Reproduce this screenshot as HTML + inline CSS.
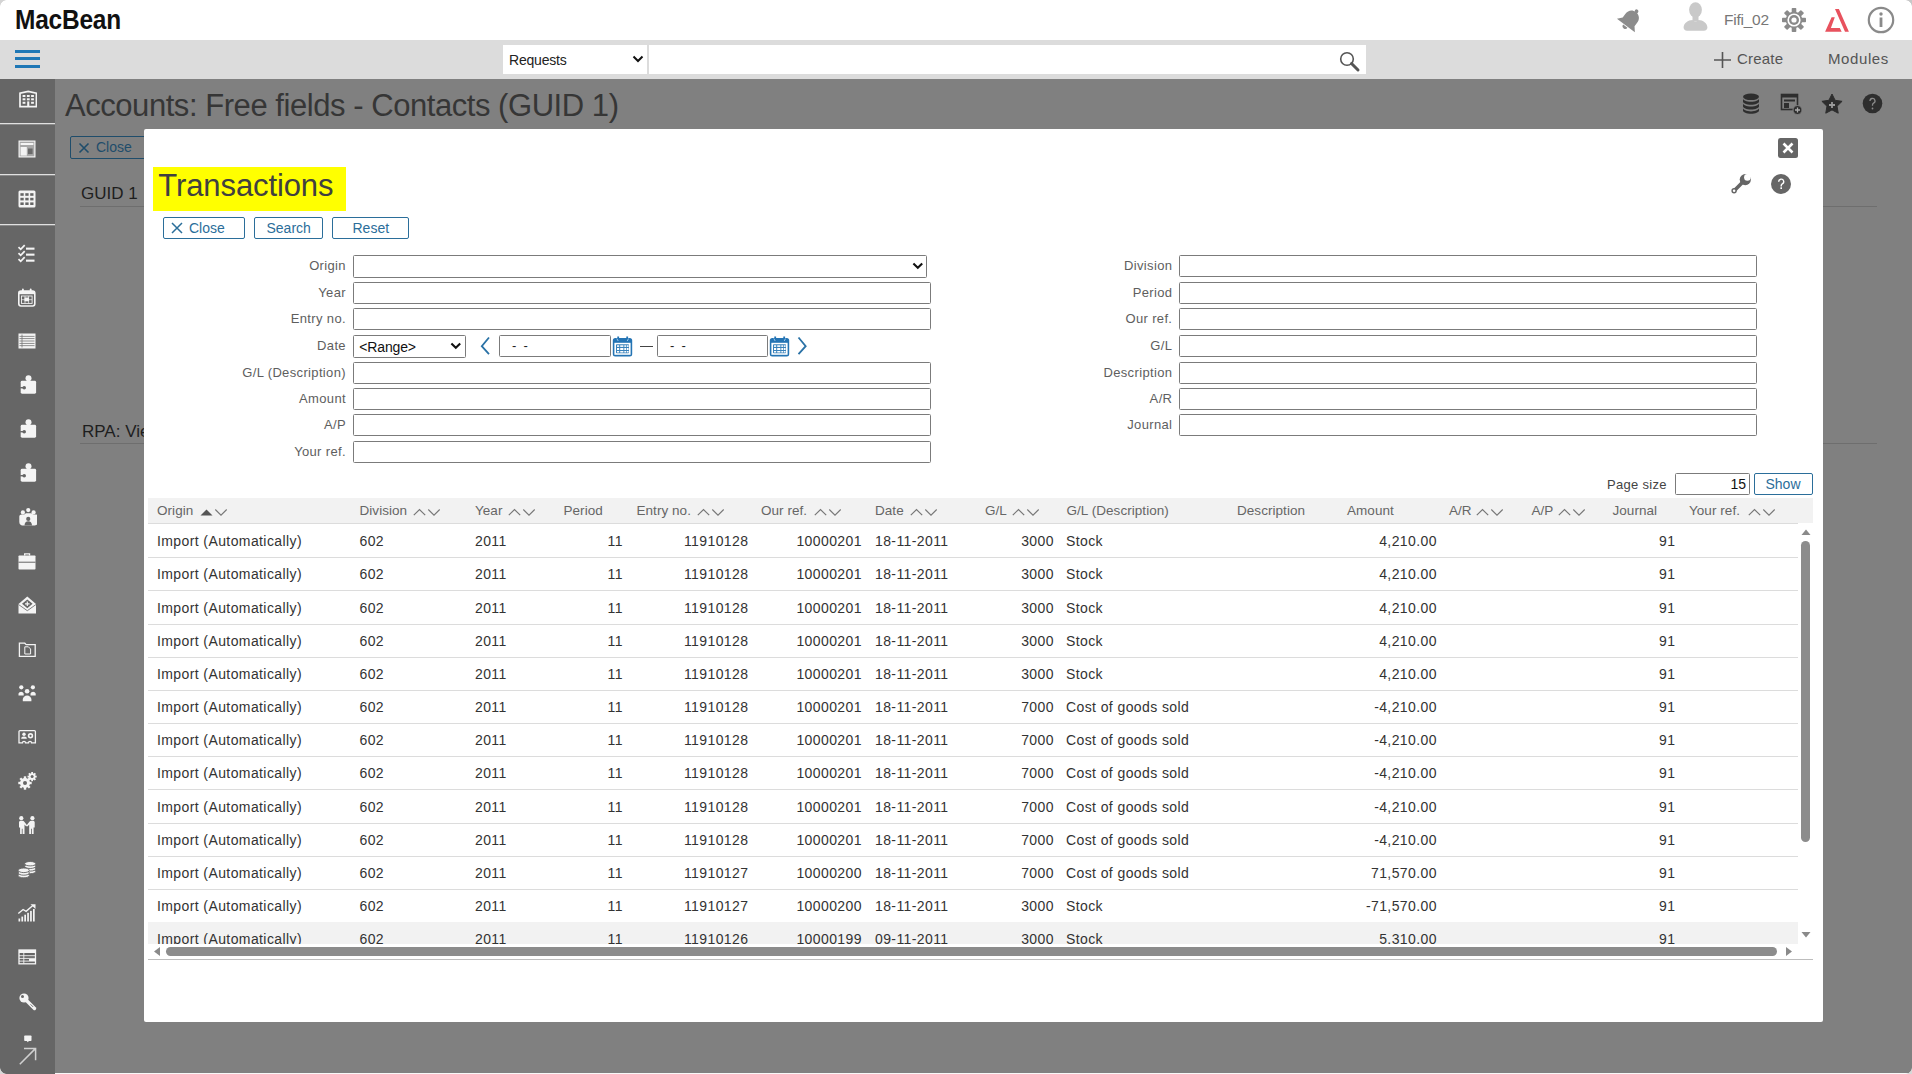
<!DOCTYPE html>
<html><head><meta charset="utf-8"><style>
*{box-sizing:border-box;margin:0;padding:0}
html,body{width:1912px;height:1074px;overflow:hidden;background:#808080;font-family:"Liberation Sans",sans-serif;}
.a{position:absolute}
#hdr{left:0;top:0;width:1912px;height:40px;background:#fff}
#nav{left:0;top:40px;width:1912px;height:39px;background:#dcdcdc}
#side{left:0;top:79px;width:55px;height:995px;background:#676767}
.sep{position:absolute;left:0;width:55px;height:2px;background:#8c8c8c}
#modal{left:144px;top:129px;width:1679px;height:893px;background:#fff;border-radius:3px}
.lbl{position:absolute;font-size:13px;color:#5a5a5a;text-align:right;width:200px;letter-spacing:0.3px;line-height:16px;white-space:nowrap}
.inp{position:absolute;height:22px;border:1px solid #7a7a7a;border-radius:2px;background:#fff}
.btn{position:absolute;height:22px;border:1px solid #3481b8;border-radius:2px;color:#2f7bb5;font-size:14px;line-height:20px;background:#fff;white-space:nowrap}
.th{position:absolute;top:504px;font-size:13px;color:#6a6a6a;letter-spacing:0.3px;white-space:nowrap;line-height:16px}
.sort{position:absolute;top:509px}
.row{position:absolute;left:148px;width:1650px;border-bottom:1px solid #dcdcdc}
.c{position:absolute;font-size:13px;color:#333;letter-spacing:0.9px;white-space:nowrap;line-height:16px}
.r{text-align:right}
svg{position:absolute;display:block}
</style></head><body>
<div style="position:absolute;left:0px;top:0px;width:1912px;height:40px;background:#fff;"></div><div style="position:absolute;left:0px;top:40px;width:1912px;height:39px;background:#dcdcdc;"></div><div style="position:absolute;top:6.84px;font-size:27px;line-height:27px;color:#111;white-space:nowrap;letter-spacing:-0.2px;font-weight:bold;left:14.50px;transform:scaleX(0.905);transform-origin:0 0;">MacBean</div><svg style="left:1616px;top:6px;" width="28" height="28" viewBox="0 0 28 28"><g transform="rotate(37 14 14)" fill="#8c8c8c"><path d="M14 4.2c-4.6 0-7.4 3.3-7.4 7.8v4.3L2.8 20.8h22.4l-3.8-4.5V12c0-4.5-2.8-7.8-7.4-7.8z"/><circle cx="14" cy="3.2" r="1.9"/><path d="M11.3 21.8a2.7 2.7 0 0 0 5.4 0z"/></g></svg><svg style="left:1682px;top:1px;" width="28" height="31" viewBox="0 0 28 31"><g fill="#c9c9c9"><ellipse cx="13.5" cy="8.8" rx="6.4" ry="7.6"/><path d="M10.5 15h6v5h-6z"/><path d="M1.6 26.5c0-4.6 4.4-7.4 9-7.6 .9 1 1.8 1.4 2.9 1.4s2-.4 2.9-1.4c4.6.2 9 3 9 7.6 0 2-1.3 3.2-3.5 3.2H5.1c-2.2 0-3.5-1.2-3.5-3.2z"/></g></svg><div style="position:absolute;top:11.78px;font-size:15.5px;line-height:15.5px;color:#777;white-space:nowrap;letter-spacing:-0.25px;left:1724.00px;">Fifi_02</div><svg style="left:1782px;top:8px;" width="24" height="24" viewBox="0 0 24 24"><g fill="#8a8a8a" transform="translate(12 12)"><rect x="-2.3" y="-12" width="4.6" height="6" rx="0.8" transform="rotate(0)"/><rect x="-2.3" y="-12" width="4.6" height="6" rx="0.8" transform="rotate(45)"/><rect x="-2.3" y="-12" width="4.6" height="6" rx="0.8" transform="rotate(90)"/><rect x="-2.3" y="-12" width="4.6" height="6" rx="0.8" transform="rotate(135)"/><rect x="-2.3" y="-12" width="4.6" height="6" rx="0.8" transform="rotate(180)"/><rect x="-2.3" y="-12" width="4.6" height="6" rx="0.8" transform="rotate(225)"/><rect x="-2.3" y="-12" width="4.6" height="6" rx="0.8" transform="rotate(270)"/><rect x="-2.3" y="-12" width="4.6" height="6" rx="0.8" transform="rotate(315)"/><circle r="8.3"/><circle r="6.6" fill="#fff"/><circle r="5" fill="#8a8a8a"/><circle r="2.6" fill="#fff"/></g></svg><svg style="left:1824px;top:8px;" width="26" height="25" viewBox="0 0 26 25"><path fill="#e8525e" d="M7.6 9.2h3.2L6.9 20h8.9l1.9 3.8H1.1zM11 1h3.9l10 22.8H21z"/></svg><svg style="left:1867px;top:6px;" width="28" height="28" viewBox="0 0 28 28"><circle cx="14" cy="14" r="12.2" fill="none" stroke="#8a8a8a" stroke-width="2.2"/><rect x="12.6" y="11.5" width="2.8" height="9.5" fill="#8a8a8a"/><circle cx="14" cy="8" r="1.7" fill="#8a8a8a"/></svg><div style="position:absolute;left:15px;top:50px;width:25px;height:3px;background:#1f78b6;"></div><div style="position:absolute;left:15px;top:57px;width:25px;height:3px;background:#1f78b6;"></div><div style="position:absolute;left:15px;top:65px;width:25px;height:3px;background:#1f78b6;"></div><div style="position:absolute;left:503px;top:45px;width:144px;height:29px;background:#fff;"></div><div style="position:absolute;top:53.15px;font-size:14px;line-height:14px;color:#222;white-space:nowrap;letter-spacing:-0.2px;left:509.00px;">Requests</div><svg style="left:632px;top:54px;" width="12" height="10" viewBox="0 0 12 10"><path d="M1.5 2.5l4.5 4.5 4.5-4.5" fill="none" stroke="#111" stroke-width="2"/></svg><div style="position:absolute;left:649px;top:45px;width:717px;height:29px;background:#fff;"></div><svg style="left:1337px;top:49px;" width="26" height="25" viewBox="0 0 26 25"><circle cx="10" cy="10" r="6.3" fill="none" stroke="#555" stroke-width="1.6"/><path d="M14.5 14.5l6.5 6.5" stroke="#555" stroke-width="3" stroke-linecap="round"/></svg><svg style="left:1714px;top:52px;" width="17" height="16" viewBox="0 0 17 16"><path d="M8.5 0v16M0 8h17" stroke="#555" stroke-width="1.6"/></svg><div style="position:absolute;top:51.30px;font-size:15px;line-height:15px;color:#555;white-space:nowrap;letter-spacing:0.2px;left:1737.00px;">Create</div><div style="position:absolute;top:51.30px;font-size:15px;line-height:15px;color:#555;white-space:nowrap;letter-spacing:0.6px;left:1828.00px;">Modules</div>
<div style="position:absolute;left:0px;top:79px;width:55px;height:995px;background:#666;"></div><div style="position:absolute;left:0px;top:123px;width:55px;height:1px;background:#e0e0e0;"></div><div style="position:absolute;left:0px;top:124px;width:55px;height:1px;background:#8a8a8a;"></div><div style="position:absolute;left:0px;top:174px;width:55px;height:1px;background:#e0e0e0;"></div><div style="position:absolute;left:0px;top:175px;width:55px;height:1px;background:#8a8a8a;"></div><div style="position:absolute;left:0px;top:224px;width:55px;height:1px;background:#e0e0e0;"></div><div style="position:absolute;left:0px;top:225px;width:55px;height:1px;background:#8a8a8a;"></div><svg style="left:16.5px;top:89px;" width="20" height="20" viewBox="0 0 20 20"><path fill="none" stroke="#f4f4f4" stroke-width="1.7" d="M3 17.6V4.2L11.2 2.4 19.4 4.2v13.4z"/><g fill="#f4f4f4"><rect x="5.60" y="6.00" width="2.8" height="2"/><rect x="5.60" y="9.30" width="2.8" height="2"/><rect x="5.60" y="12.80" width="2.8" height="2"/><rect x="9.90" y="6.00" width="2.8" height="2"/><rect x="9.90" y="9.30" width="2.8" height="2"/><rect x="14.10" y="6.00" width="2.8" height="2"/><rect x="14.10" y="9.30" width="2.8" height="2"/><rect x="14.10" y="12.80" width="2.8" height="2"/><rect x="10.2" y="12.4" width="2.1" height="5.2"/></g></svg><svg style="left:16.5px;top:139px;" width="20" height="20" viewBox="0 0 20 20"><rect x="1.5" y="1.5" width="17" height="17" fill="#f4f4f4"/><rect x="2.7" y="2.7" width="14.6" height="14.6" fill="#a8a8a8"/><rect x="3.6" y="4" width="12.8" height="2" fill="#f4f4f4"/><rect x="3.6" y="8" width="6.2" height="8.6" fill="#f4f4f4"/><rect x="11" y="9.5" width="4.6" height="5.6" fill="#6a6a6a"/></svg><svg style="left:16.5px;top:189px;" width="20" height="20" viewBox="0 0 20 20"><rect x="1.5" y="1.5" width="17" height="17" rx="1.5" fill="#f4f4f4"/><rect x="3.4" y="4.2" width="3.3" height="2.6" fill="#666"/><rect x="3.4" y="8.8" width="3.3" height="2.6" fill="#666"/><rect x="3.4" y="13.399999999999999" width="3.3" height="2.6" fill="#666"/><rect x="8.3" y="4.2" width="3.3" height="2.6" fill="#666"/><rect x="8.3" y="8.8" width="3.3" height="2.6" fill="#666"/><rect x="8.3" y="13.399999999999999" width="3.3" height="2.6" fill="#666"/><rect x="13.200000000000001" y="4.2" width="3.3" height="2.6" fill="#666"/><rect x="13.200000000000001" y="8.8" width="3.3" height="2.6" fill="#666"/><rect x="13.200000000000001" y="13.399999999999999" width="3.3" height="2.6" fill="#666"/></svg><svg style="left:16.5px;top:242.7px;" width="20" height="20" viewBox="0 0 20 20"><path d="M1.5 4.2l2.2 2.2 4-4.3" fill="none" stroke="#f4f4f4" stroke-width="1.7"/><rect x="9" y="4.6" width="8.5" height="2.1" fill="#f4f4f4"/><path d="M1.5 10.2l2.2 2.2 4-4.3" fill="none" stroke="#f4f4f4" stroke-width="1.7"/><rect x="9" y="10.6" width="8.5" height="2.1" fill="#f4f4f4"/><path d="M1.5 16.2l2.2 2.2 4-4.3" fill="none" stroke="#f4f4f4" stroke-width="1.7"/><rect x="9" y="16.6" width="8.5" height="2.1" fill="#f4f4f4"/></svg><svg style="left:16.5px;top:286.7px;" width="20" height="20" viewBox="0 0 20 20"><rect x="1.8" y="4" width="16" height="15" rx="2.2" fill="none" stroke="#f4f4f4" stroke-width="1.6"/><rect x="1.8" y="4" width="16" height="3.2" fill="#f4f4f4"/><rect x="5" y="1.5" width="1.8" height="4" rx=".9" fill="#f4f4f4"/><rect x="12.8" y="1.5" width="1.8" height="4" rx=".9" fill="#f4f4f4"/><rect x="4.5" y="9" width="10.6" height="7.4" fill="none" stroke="#f4f4f4" stroke-width="0.9"/><path d="M8 9v7.4M11.6 9v7.4M4.5 12.7h10.6" stroke="#f4f4f4" stroke-width="0.7"/><rect x="7.5" y="10.5" width="4.5" height="3.8" fill="#f4f4f4"/></svg><svg style="left:16.5px;top:330.7px;" width="20" height="20" viewBox="0 0 20 20"><rect x="1.5" y="2.5" width="17" height="15" fill="#f4f4f4"/><rect x="2.5" y="4.9" width="15" height="0.8" fill="#777"/><rect x="2.5" y="7.25" width="15" height="0.8" fill="#777"/><rect x="2.5" y="9.600000000000001" width="15" height="0.8" fill="#777"/><rect x="2.5" y="11.950000000000001" width="15" height="0.8" fill="#777"/><rect x="2.5" y="14.3" width="15" height="0.8" fill="#777"/><rect x="4.6" y="3.5" width="0.8" height="13" fill="#777"/></svg><svg style="left:16.5px;top:374.7px;" width="20" height="20" viewBox="0 0 20 20"><rect x="3.7" y="5.8" width="15.4" height="12.9" rx="1.4" fill="#f4f4f4"/><circle cx="11.5" cy="3.2" r="3" fill="#f4f4f4"/><rect x="10" y="4" width="3" height="2.5" fill="#f4f4f4"/><circle cx="7.2" cy="12.7" r="1.8" fill="#666"/><rect x="3.2" y="12" width="4" height="1.4" fill="#666"/></svg><svg style="left:16.5px;top:418.7px;" width="20" height="20" viewBox="0 0 20 20"><rect x="3.7" y="5.8" width="15.4" height="12.9" rx="1.4" fill="#f4f4f4"/><circle cx="11.5" cy="3.2" r="3" fill="#f4f4f4"/><rect x="10" y="4" width="3" height="2.5" fill="#f4f4f4"/><circle cx="7.2" cy="12.7" r="1.8" fill="#666"/><rect x="3.2" y="12" width="4" height="1.4" fill="#666"/></svg><svg style="left:16.5px;top:462.7px;" width="20" height="20" viewBox="0 0 20 20"><rect x="3.7" y="5.8" width="15.4" height="12.9" rx="1.4" fill="#f4f4f4"/><circle cx="11.5" cy="3.2" r="3" fill="#f4f4f4"/><rect x="10" y="4" width="3" height="2.5" fill="#f4f4f4"/><circle cx="7.2" cy="12.7" r="1.8" fill="#666"/><rect x="3.2" y="12" width="4" height="1.4" fill="#666"/></svg><svg style="left:16.5px;top:506.70000000000005px;" width="20" height="20" viewBox="0 0 20 20"><g fill="#f4f4f4"><circle cx="5.9" cy="5.4" r="2.1"/><circle cx="11.25" cy="3.1" r="2.1"/><circle cx="16.6" cy="5.4" r="2.1"/><path d="M2.3 9.6c0-1.3 1-2.1 2.4-2.1h2.5l1.8-1.3h5.5l1.8 1.3h2.3c1.4 0 2.4.8 2.4 2.1v5.3c0 2.6-2 3.6-4.2 3.6H6.5c-2.2 0-4.2-1-4.2-3.6z"/></g><circle cx="11.25" cy="11.9" r="2.1" fill="#666"/><path d="M7.5 18.5c0-2.8 1.6-4.3 3.75-4.3s3.75 1.5 3.75 4.3z" fill="#666"/></svg><svg style="left:16.5px;top:550.7px;" width="20" height="20" viewBox="0 0 20 20"><g fill="#f4f4f4"><rect x="1.5" y="4.5" width="17" height="14" rx="0.8"/><path d="M7 4.5V2.2h6.2v2.3h-1.3V3.4H8.3v1.1z"/></g><rect x="1.5" y="10.7" width="17" height="1" fill="#666"/></svg><svg style="left:16.5px;top:594.7px;" width="20" height="20" viewBox="0 0 20 20"><path fill="#f4f4f4" d="M1.5 9l8.8-7.5L19 9v9.5H1.5z"/><path d="M5 8.8l5.3-4.4 5.3 4.4-5.3 4.4z" fill="#666"/><path d="M8 8.8h4.6M10.3 6.5v4.6" stroke="#f4f4f4" stroke-width="1.2"/><path d="M1.5 9.5l8.8 6.2 8.7-6.2" fill="none" stroke="#666" stroke-width="0.8"/></svg><svg style="left:16.5px;top:638.7px;" width="20" height="20" viewBox="0 0 20 20"><path fill="none" stroke="#f4f4f4" stroke-width="1.3" d="M2.4 4.2h5.4l1.4 1.4h9v11.8H2.4z"/><path fill="none" stroke="#f4f4f4" stroke-width="1" d="M7.8 7.8h3.6l2.2 2.2v5H7.8z"/></svg><svg style="left:16.5px;top:682.7px;" width="20" height="20" viewBox="0 0 20 20"><g fill="#f4f4f4"><circle cx="4.3" cy="4.3" r="2.1"/><circle cx="15.9" cy="4.3" r="2.1"/><circle cx="10.1" cy="8.3" r="2.3"/><path d="M1.5 10.5a2.8 2.8 0 0 1 5.2 0v2H1.5zM13.5 10.5a2.8 2.8 0 0 1 5.2 0v2h-5.2z"/><path d="M5.8 16.5a4.3 4 0 0 1 8.6 0v1.8H5.8z"/></g></svg><svg style="left:16.5px;top:726.7px;" width="20" height="20" viewBox="0 0 20 20"><path fill="none" stroke="#f4f4f4" stroke-width="1.3" d="M3 3.6h14.4a1 1 0 0 1 1 1v11.2H14.5a1.5 1.5 0 0 0-3 0H8.5a1.5 1.5 0 0 0-3 0H2v-11.2a1 1 0 0 1 1-1z"/><g fill="#f4f4f4"><circle cx="7" cy="7.2" r="1.7"/><path d="M4.2 11.8a2.8 2.4 0 0 1 5.6 0z"/><circle cx="13.5" cy="8.8" r="2.7"/></g><circle cx="13.5" cy="8.8" r="1.1" fill="#666"/></svg><svg style="left:16.5px;top:770.7px;" width="20" height="20" viewBox="0 0 20 20"><rect x="6.8" y="5.3" width="2.4" height="13.4" fill="#f4f4f4" transform="rotate(0 8 12)"/><rect x="6.8" y="5.3" width="2.4" height="13.4" fill="#f4f4f4" transform="rotate(45 8 12)"/><rect x="6.8" y="5.3" width="2.4" height="13.4" fill="#f4f4f4" transform="rotate(90 8 12)"/><rect x="6.8" y="5.3" width="2.4" height="13.4" fill="#f4f4f4" transform="rotate(135 8 12)"/><rect x="14.2" y="1" width="1.8" height="9.2" fill="#f4f4f4" transform="rotate(0 15.1 5.6)"/><rect x="14.2" y="1" width="1.8" height="9.2" fill="#f4f4f4" transform="rotate(45 15.1 5.6)"/><rect x="14.2" y="1" width="1.8" height="9.2" fill="#f4f4f4" transform="rotate(90 15.1 5.6)"/><rect x="14.2" y="1" width="1.8" height="9.2" fill="#f4f4f4" transform="rotate(135 15.1 5.6)"/><circle cx="8" cy="12" r="5" fill="#f4f4f4"/><circle cx="15.1" cy="5.6" r="3.4" fill="#f4f4f4"/><circle cx="8" cy="12" r="2" fill="#666"/><circle cx="15.1" cy="5.6" r="1.5" fill="#666"/></svg><svg style="left:16.5px;top:814.7px;" width="20" height="20" viewBox="0 0 20 20"><g fill="#f4f4f4"><circle cx="4.3" cy="3.2" r="2.1"/><circle cx="15.4" cy="3.2" r="2.1"/><path d="M2 7.3c0-1 .8-1.6 1.7-1.6h1.8c.8 0 1.3.4 1.8 1l2.9 3.9-1 .9-1.7-1.9V19H5.6v-5.2h-.8V19H3.1v-6.5H2z"/><path d="M17.7 7.3c0-1-.8-1.6-1.7-1.6h-1.8c-.8 0-1.3.4-1.8 1l-2.9 3.9 1 .9 1.7-1.9V19h1.9v-5.2h.8V19h1.7v-6.5h1.1z"/></g></svg><svg style="left:16.5px;top:858.7px;" width="20" height="20" viewBox="0 0 20 20"><g fill="#f4f4f4" stroke="#666" stroke-width="0.9"><ellipse cx="13.2" cy="12.5" rx="5.6" ry="2.2"/><ellipse cx="13.2" cy="9.9" rx="5.6" ry="2.2"/><ellipse cx="13.2" cy="7.3" rx="5.6" ry="2.2"/><ellipse cx="13.2" cy="4.699999999999999" rx="5.6" ry="2.2"/><ellipse cx="6.8" cy="16.5" rx="5.6" ry="2.3"/><ellipse cx="6.8" cy="13.9" rx="5.6" ry="2.3"/><ellipse cx="6.8" cy="11.3" rx="5.6" ry="2.3"/></g></svg><svg style="left:16.5px;top:902.7px;" width="20" height="20" viewBox="0 0 20 20"><g fill="#f4f4f4"><rect x="1.5" y="15.5" width="1.7" height="3.0"/><rect x="4.4" y="13.6" width="1.7" height="4.9"/><rect x="7.3" y="11.7" width="1.7" height="6.8"/><rect x="10.2" y="9.8" width="1.7" height="8.7"/><rect x="13.1" y="7.9" width="1.7" height="10.6"/><rect x="16.0" y="6.0" width="1.7" height="12.5"/></g><path d="M1.3 10.5l4.8-4 3 1.8 7-6" fill="none" stroke="#f4f4f4" stroke-width="1.4"/><path d="M13.5 1.2h5v4.7z" fill="#f4f4f4"/></svg><svg style="left:16.5px;top:946.7px;" width="20" height="20" viewBox="0 0 20 20"><rect x="2" y="3" width="16.5" height="13.8" fill="none" stroke="#f4f4f4" stroke-width="1.3"/><rect x="2" y="3" width="16.5" height="3" fill="#f4f4f4"/><path d="M2 8.7h16.5M2 11.4h16.5M2 14.1h16.5M6.8 6v10.8" stroke="#f4f4f4" stroke-width="0.9"/><rect x="12" y="12" width="6" height="2" fill="#f4f4f4"/></svg><svg style="left:16.5px;top:990.7px;" width="20" height="20" viewBox="0 0 20 20"><circle cx="7" cy="7" r="4.6" fill="#f4f4f4"/><circle cx="5.5" cy="5.5" r="1.5" fill="#666"/><path d="M9.5 9.5l8 8" stroke="#f4f4f4" stroke-width="3.4" stroke-linecap="round"/><path d="M13.5 13.3l2.6 2.6" stroke="#666" stroke-width="0.9"/></svg><svg style="left:17px;top:1033px;" width="22" height="36" viewBox="0 0 22 36"><rect x="7.2" y="2.4" width="7.3" height="5.6" rx="0.8" fill="#f4f4f4"/><path d="M9.8 8l1 1.3 1-1.3z" fill="#f4f4f4"/><path d="M2.8 31.2L18.6 15.4M7 15.4h11.6v11.8" fill="none" stroke="#d0d0d0" stroke-width="1.5"/></svg><div style="position:absolute;top:89.76px;font-size:31px;line-height:31px;color:#363636;white-space:nowrap;letter-spacing:-0.45px;left:65.00px;">Accounts: Free fields - Contacts (GUID 1)</div><div style="position:absolute;left:70px;top:136px;width:90px;height:23px;border:1.5px solid #1f4d6b;border-radius:2px"></div><svg style="left:78px;top:142px;" width="12" height="12" viewBox="0 0 12 12"><path d="M1.5 1.5l9 9M10.5 1.5l-9 9" stroke="#1f4d6b" stroke-width="1.6"/></svg><div style="position:absolute;top:140.15px;font-size:14px;line-height:14px;color:#1f4d6b;white-space:nowrap;left:96.00px;">Close</div><div style="position:absolute;top:185.11px;font-size:17px;line-height:17px;color:#1e1e1e;white-space:nowrap;left:81.00px;">GUID 1</div><div style="position:absolute;left:80px;top:206px;width:1797px;height:1px;background:#6e6e6e;"></div><div style="position:absolute;top:422.61px;font-size:17px;line-height:17px;color:#1e1e1e;white-space:nowrap;left:82.00px;">RPA: View</div><div style="position:absolute;left:80px;top:443px;width:1797px;height:1px;background:#6e6e6e;"></div><svg style="left:1741px;top:93px;" width="20" height="21" viewBox="0 0 20 21"><g fill="#2e2e2e"><ellipse cx="10" cy="3.8" rx="8" ry="3.3"/><path d="M2 5.5v3c0 1.8 3.6 3.3 8 3.3s8-1.5 8-3.3v-3c0 1.8-3.6 3.3-8 3.3S2 7.3 2 5.5z"/><path d="M2 10.3v3c0 1.8 3.6 3.3 8 3.3s8-1.5 8-3.3v-3c0 1.8-3.6 3.3-8 3.3s-8-1.5-8-3.3z"/><path d="M2 15.1v2.3c0 1.8 3.6 3.3 8 3.3s8-1.5 8-3.3v-2.3c0 1.8-3.6 3.3-8 3.3s-8-1.5-8-3.3z"/></g></svg><svg style="left:1780px;top:93px;" width="23" height="22" viewBox="0 0 23 22"><rect x="1.5" y="1.5" width="16" height="15" fill="none" stroke="#2e2e2e" stroke-width="1.6"/><rect x="1.5" y="1.5" width="16" height="3" fill="#2e2e2e"/><rect x="4" y="6.5" width="11" height="2" fill="#2e2e2e"/><rect x="4" y="10" width="5" height="5" fill="#2e2e2e"/><circle cx="17.5" cy="17" r="4.5" fill="#2e2e2e" stroke="#808080" stroke-width="1"/><path d="M17.5 14.5v5M15 17h5" stroke="#aaa" stroke-width="1.3"/></svg><svg style="left:1821px;top:93px;" width="22" height="21" viewBox="0 0 22 21"><path fill="#2e2e2e" stroke="#2e2e2e" stroke-width="1" stroke-linejoin="round" d="M11.00 1.00 L14.12 7.31 L21.08 8.32 L16.04 13.24 L17.23 20.18 L11.00 16.90 L4.77 20.18 L5.96 13.24 L0.92 8.32 L7.88 7.31z"/><path d="M11 9v6M8 12h6" stroke="#9a9a9a" stroke-width="1.8"/></svg><svg style="left:1862px;top:93px;" width="21" height="21" viewBox="0 0 21 21"><circle cx="10.5" cy="10.5" r="9.8" fill="#2e2e2e"/><path d="M8 8a2.5 2.5 0 1 1 3.6 2.2c-.8.4-1.1.9-1.1 1.8v.8" fill="none" stroke="#8a8a8a" stroke-width="1.3"/><circle cx="10.5" cy="15.5" r="0.9" fill="#8a8a8a"/></svg><div style="position:absolute;left:55px;top:1073px;width:1857px;height:1px;background:#f8f8f8;"></div><div style="position:absolute;left:0;top:0;width:7px;height:7px;background:radial-gradient(circle at 7px 7px,transparent 6.5px,#d4d4d4 7.2px)"></div><div style="position:absolute;left:1905px;top:0;width:7px;height:7px;background:radial-gradient(circle at 0 7px,transparent 6.5px,#c8c8c8 7.2px)"></div><div style="position:absolute;left:0;top:1067px;width:7px;height:7px;background:radial-gradient(circle at 7px 0,transparent 6.5px,#d8d8d8 7.2px)"></div><div style="position:absolute;left:1905px;top:1067px;width:7px;height:7px;background:radial-gradient(circle at 0 0,transparent 6.5px,#d8d8d8 7.2px)"></div>
<div style="position:absolute;left:144px;top:129px;width:1679px;height:893px;background:#fff;border-radius:2px"></div><svg style="left:1778px;top:138px;" width="20" height="20" viewBox="0 0 20 20"><rect width="20" height="20" rx="2.5" fill="#666"/><path d="M5.5 5.5l9 9M14.5 5.5l-9 9" stroke="#fff" stroke-width="2.6"/></svg><svg style="left:1730px;top:172px;" width="24" height="24" viewBox="0 0 24 24"><circle cx="15.3" cy="7.6" r="5.6" fill="#666"/><circle cx="17.4" cy="5.4" r="3.3" fill="#fff"/><path d="M12.6 10.3L4.2 18.7" stroke="#666" stroke-width="3.6" stroke-linecap="round"/><circle cx="4.1" cy="18.8" r="2.7" fill="#666"/><circle cx="4.1" cy="18.8" r="1.25" fill="#fff"/></svg><svg style="left:1771px;top:174px;" width="20" height="20" viewBox="0 0 20 20"><circle cx="10" cy="10" r="10" fill="#666"/><path d="M7.7 7.7a2.5 2.5 0 1 1 3.6 2.2c-.8.4-1.1 1-1.1 1.9v.6" fill="none" stroke="#fff" stroke-width="1.4"/><rect x="9.4" y="13.3" width="1.6" height="1.7" fill="#fff"/></svg><div style="position:absolute;left:153px;top:167px;width:193px;height:44px;background:#ffff00;"></div><div style="position:absolute;top:170.16px;font-size:31px;line-height:31px;color:#404040;white-space:nowrap;letter-spacing:-0.1px;left:158.30px;">Transactions</div><div style="position:absolute;left:163px;top:217px;width:82px;height:22px;border:1px solid #2b6e9a;border-radius:2px"></div><div style="position:absolute;top:221.15px;font-size:14px;line-height:14px;color:#2b6e9a;white-space:nowrap;left:189.00px;">Close</div><svg style="left:171px;top:222px;" width="12" height="12" viewBox="0 0 12 12"><path d="M1 1l10 10M11 1L1 11" stroke="#2b6e9a" stroke-width="1.5"/></svg><div style="position:absolute;left:254px;top:217px;width:69px;height:22px;border:1px solid #2b6e9a;border-radius:2px"></div><div style="position:absolute;top:221.15px;font-size:14px;line-height:14px;color:#2b6e9a;white-space:nowrap;left:266.50px;">Search</div><div style="position:absolute;left:332px;top:217px;width:77px;height:22px;border:1px solid #2b6e9a;border-radius:2px"></div><div style="position:absolute;top:221.15px;font-size:14px;line-height:14px;color:#2b6e9a;white-space:nowrap;left:352.50px;">Reset</div><div style="position:absolute;top:259.00px;font-size:13px;line-height:13px;color:#5e5e5e;white-space:nowrap;letter-spacing:0.35px;left:145.95px;width:200px;text-align:right;">Origin</div><div style="position:absolute;left:353px;top:255px;width:574px;height:23px;border:1px solid #7b7b7b;border-radius:1.5px;background:#fff;"></div><svg style="left:911.6px;top:261.8px;" width="12" height="8" viewBox="0 0 12 8"><path d="M1.4 1.4l4.4 4.3 4.4-4.3" fill="none" stroke="#111" stroke-width="2.1"/></svg><div style="position:absolute;top:286.00px;font-size:13px;line-height:13px;color:#5e5e5e;white-space:nowrap;letter-spacing:0.35px;left:145.95px;width:200px;text-align:right;">Year</div><div style="position:absolute;left:353px;top:282px;width:578px;height:22px;border:1px solid #7b7b7b;border-radius:1.5px;background:#fff;"></div><div style="position:absolute;top:312.00px;font-size:13px;line-height:13px;color:#5e5e5e;white-space:nowrap;letter-spacing:0.35px;left:145.95px;width:200px;text-align:right;">Entry no.</div><div style="position:absolute;left:353px;top:308px;width:578px;height:22px;border:1px solid #7b7b7b;border-radius:1.5px;background:#fff;"></div><div style="position:absolute;top:339.00px;font-size:13px;line-height:13px;color:#5e5e5e;white-space:nowrap;letter-spacing:0.35px;left:145.95px;width:200px;text-align:right;">Date</div><div style="position:absolute;left:353px;top:335px;width:113px;height:23px;border:1px solid #7b7b7b;border-radius:1.5px;background:#fff;"></div><div style="position:absolute;top:339.95px;font-size:14px;line-height:14px;color:#111;white-space:nowrap;letter-spacing:-0.15px;left:359.30px;">&lt;Range&gt;</div><svg style="left:450.3px;top:342px;" width="12" height="8" viewBox="0 0 12 8"><path d="M1.4 1.4l4.4 4.3 4.4-4.3" fill="none" stroke="#111" stroke-width="2.1"/></svg><svg style="left:478px;top:336px;" width="14" height="20" viewBox="0 0 14 20"><path d="M11 1.5L3.8 10.2l7.2 8" fill="none" stroke="#2a72a6" stroke-width="1.8"/></svg><div style="position:absolute;left:499px;top:335px;width:112px;height:22px;border:1px solid #7b7b7b;border-radius:1.5px;background:#fff;"></div><div style="position:absolute;top:339.00px;font-size:13px;line-height:13px;color:#222;white-space:nowrap;left:512.00px;">-&nbsp;&nbsp;-</div><svg style="left:611.5px;top:335.5px;" width="21" height="21" viewBox="0 0 21 21"><rect x="0.8" y="2" width="19.4" height="18.5" rx="2.5" fill="#2474b4"/><rect x="2.4" y="6.8" width="16.2" height="12" fill="#fff"/><rect x="4" y="8.3" width="13" height="9" rx="0.8" fill="#2474b4" opacity="0.9"/><g fill="#fff"><rect x="5" y="9.3" width="2.2" height="1.6"/><rect x="8.2" y="9.3" width="3.2" height="1.6"/><rect x="12.3" y="9.3" width="2" height="1.6"/><rect x="15" y="9.3" width="1.6" height="1.6"/><rect x="5" y="12" width="2.2" height="2"/><rect x="8.2" y="12" width="3.2" height="2"/><rect x="12.3" y="12" width="2" height="2"/><rect x="15" y="12" width="1.6" height="2"/><rect x="5" y="15" width="2.2" height="1.5"/><rect x="8.2" y="15" width="3.2" height="1.5"/><rect x="12.3" y="15" width="2" height="1.5"/><rect x="15" y="15" width="1.6" height="1.5"/></g><path d="M6.2 0.5v4.5M15.2 0.5v4.5" stroke="#2474b4" stroke-width="1.8"/><path d="M4.8 2.5l1.4 2.5M16.6 2.5l-1.4 2.5" stroke="#cfe8ff" stroke-width="0.7"/></svg><div style="position:absolute;left:640px;top:346px;width:13px;height:1px;background:#444;"></div><div style="position:absolute;left:657px;top:335px;width:111px;height:22px;border:1px solid #7b7b7b;border-radius:1.5px;background:#fff;"></div><div style="position:absolute;top:339.00px;font-size:13px;line-height:13px;color:#222;white-space:nowrap;left:670.00px;">-&nbsp;&nbsp;-</div><svg style="left:768.5px;top:335.5px;" width="21" height="21" viewBox="0 0 21 21"><rect x="0.8" y="2" width="19.4" height="18.5" rx="2.5" fill="#2474b4"/><rect x="2.4" y="6.8" width="16.2" height="12" fill="#fff"/><rect x="4" y="8.3" width="13" height="9" rx="0.8" fill="#2474b4" opacity="0.9"/><g fill="#fff"><rect x="5" y="9.3" width="2.2" height="1.6"/><rect x="8.2" y="9.3" width="3.2" height="1.6"/><rect x="12.3" y="9.3" width="2" height="1.6"/><rect x="15" y="9.3" width="1.6" height="1.6"/><rect x="5" y="12" width="2.2" height="2"/><rect x="8.2" y="12" width="3.2" height="2"/><rect x="12.3" y="12" width="2" height="2"/><rect x="15" y="12" width="1.6" height="2"/><rect x="5" y="15" width="2.2" height="1.5"/><rect x="8.2" y="15" width="3.2" height="1.5"/><rect x="12.3" y="15" width="2" height="1.5"/><rect x="15" y="15" width="1.6" height="1.5"/></g><path d="M6.2 0.5v4.5M15.2 0.5v4.5" stroke="#2474b4" stroke-width="1.8"/><path d="M4.8 2.5l1.4 2.5M16.6 2.5l-1.4 2.5" stroke="#cfe8ff" stroke-width="0.7"/></svg><svg style="left:796px;top:336px;" width="14" height="20" viewBox="0 0 14 20"><path d="M2.5 1.5L9.7 10.2l-7.2 8" fill="none" stroke="#2a72a6" stroke-width="1.8"/></svg><div style="position:absolute;top:366.00px;font-size:13px;line-height:13px;color:#5e5e5e;white-space:nowrap;letter-spacing:0.35px;left:145.95px;width:200px;text-align:right;">G/L (Description)</div><div style="position:absolute;left:353px;top:362px;width:578px;height:22px;border:1px solid #7b7b7b;border-radius:1.5px;background:#fff;"></div><div style="position:absolute;top:392.00px;font-size:13px;line-height:13px;color:#5e5e5e;white-space:nowrap;letter-spacing:0.35px;left:145.95px;width:200px;text-align:right;">Amount</div><div style="position:absolute;left:353px;top:388px;width:578px;height:22px;border:1px solid #7b7b7b;border-radius:1.5px;background:#fff;"></div><div style="position:absolute;top:418.00px;font-size:13px;line-height:13px;color:#5e5e5e;white-space:nowrap;letter-spacing:0.35px;left:145.95px;width:200px;text-align:right;">A/P</div><div style="position:absolute;left:353px;top:414px;width:578px;height:22px;border:1px solid #7b7b7b;border-radius:1.5px;background:#fff;"></div><div style="position:absolute;top:445.00px;font-size:13px;line-height:13px;color:#5e5e5e;white-space:nowrap;letter-spacing:0.35px;left:145.95px;width:200px;text-align:right;">Your ref.</div><div style="position:absolute;left:353px;top:441px;width:578px;height:22px;border:1px solid #7b7b7b;border-radius:1.5px;background:#fff;"></div><div style="position:absolute;top:259.00px;font-size:13px;line-height:13px;color:#5e5e5e;white-space:nowrap;letter-spacing:0.35px;left:972.35px;width:200px;text-align:right;">Division</div><div style="position:absolute;left:1179px;top:255px;width:578px;height:22px;border:1px solid #7b7b7b;border-radius:1.5px;background:#fff;"></div><div style="position:absolute;top:286.00px;font-size:13px;line-height:13px;color:#5e5e5e;white-space:nowrap;letter-spacing:0.35px;left:972.35px;width:200px;text-align:right;">Period</div><div style="position:absolute;left:1179px;top:282px;width:578px;height:22px;border:1px solid #7b7b7b;border-radius:1.5px;background:#fff;"></div><div style="position:absolute;top:312.00px;font-size:13px;line-height:13px;color:#5e5e5e;white-space:nowrap;letter-spacing:0.35px;left:972.35px;width:200px;text-align:right;">Our ref.</div><div style="position:absolute;left:1179px;top:308px;width:578px;height:22px;border:1px solid #7b7b7b;border-radius:1.5px;background:#fff;"></div><div style="position:absolute;top:339.00px;font-size:13px;line-height:13px;color:#5e5e5e;white-space:nowrap;letter-spacing:0.35px;left:972.35px;width:200px;text-align:right;">G/L</div><div style="position:absolute;left:1179px;top:335px;width:578px;height:22px;border:1px solid #7b7b7b;border-radius:1.5px;background:#fff;"></div><div style="position:absolute;top:366.00px;font-size:13px;line-height:13px;color:#5e5e5e;white-space:nowrap;letter-spacing:0.35px;left:972.35px;width:200px;text-align:right;">Description</div><div style="position:absolute;left:1179px;top:362px;width:578px;height:22px;border:1px solid #7b7b7b;border-radius:1.5px;background:#fff;"></div><div style="position:absolute;top:392.00px;font-size:13px;line-height:13px;color:#5e5e5e;white-space:nowrap;letter-spacing:0.35px;left:972.35px;width:200px;text-align:right;">A/R</div><div style="position:absolute;left:1179px;top:388px;width:578px;height:22px;border:1px solid #7b7b7b;border-radius:1.5px;background:#fff;"></div><div style="position:absolute;top:418.00px;font-size:13px;line-height:13px;color:#5e5e5e;white-space:nowrap;letter-spacing:0.35px;left:972.35px;width:200px;text-align:right;">Journal</div><div style="position:absolute;left:1179px;top:414px;width:578px;height:22px;border:1px solid #7b7b7b;border-radius:1.5px;background:#fff;"></div><div style="position:absolute;top:477.80px;font-size:13px;line-height:13px;color:#444;white-space:nowrap;letter-spacing:0.3px;left:1607.00px;">Page size</div><div style="position:absolute;left:1675px;top:473px;width:75px;height:22px;border:1px solid #7b7b7b;border-radius:1.5px;background:#fff;"></div><div style="position:absolute;top:477.15px;font-size:14px;line-height:14px;color:#111;white-space:nowrap;left:1706.00px;width:40px;text-align:right;">15</div><div style="position:absolute;left:1754px;top:473px;width:59px;height:22px;border:1px solid #2b6e9a;border-radius:2px"></div><div style="position:absolute;top:477.15px;font-size:14px;line-height:14px;color:#2b6e9a;white-space:nowrap;left:1765.50px;">Show</div>
<div style="position:absolute;left:148px;top:498px;width:1665px;height:25px;background:#f2f2f2;"></div><div style="position:absolute;left:148px;top:523px;width:1650px;height:1px;background:#dcdcdc;"></div><div style="position:absolute;top:504.27px;font-size:13.5px;line-height:13.5px;color:#666;white-space:nowrap;letter-spacing:0.05px;left:157.00px;">Origin</div><svg style="left:200px;top:507.7px;" width="28" height="9" viewBox="0 0 28 9"><path d="M0.5 7.5L6.5 1.5l6 6z" fill="#555"/><path d="M15.3 1.5L21 7.2l5.7-5.7" fill="none" stroke="#777" stroke-width="1.1"/></svg><div style="position:absolute;top:504.27px;font-size:13.5px;line-height:13.5px;color:#666;white-space:nowrap;letter-spacing:0.05px;left:359.50px;">Division</div><svg style="left:413px;top:507.7px;" width="28" height="9" viewBox="0 0 28 9"><path d="M0.8 7.2L6.5 1.5l5.7 5.7" fill="none" stroke="#777" stroke-width="1.2"/><path d="M15.3 1.5L21 7.2l5.7-5.7" fill="none" stroke="#777" stroke-width="1.1"/></svg><div style="position:absolute;top:504.27px;font-size:13.5px;line-height:13.5px;color:#666;white-space:nowrap;letter-spacing:0.05px;left:475.00px;">Year</div><svg style="left:508px;top:507.7px;" width="28" height="9" viewBox="0 0 28 9"><path d="M0.8 7.2L6.5 1.5l5.7 5.7" fill="none" stroke="#777" stroke-width="1.2"/><path d="M15.3 1.5L21 7.2l5.7-5.7" fill="none" stroke="#777" stroke-width="1.1"/></svg><div style="position:absolute;top:504.27px;font-size:13.5px;line-height:13.5px;color:#666;white-space:nowrap;letter-spacing:0.05px;left:563.50px;">Period</div><div style="position:absolute;top:504.27px;font-size:13.5px;line-height:13.5px;color:#666;white-space:nowrap;letter-spacing:0.05px;left:636.50px;">Entry no.</div><svg style="left:697px;top:507.7px;" width="28" height="9" viewBox="0 0 28 9"><path d="M0.8 7.2L6.5 1.5l5.7 5.7" fill="none" stroke="#777" stroke-width="1.2"/><path d="M15.3 1.5L21 7.2l5.7-5.7" fill="none" stroke="#777" stroke-width="1.1"/></svg><div style="position:absolute;top:504.27px;font-size:13.5px;line-height:13.5px;color:#666;white-space:nowrap;letter-spacing:0.05px;left:761.00px;">Our ref.</div><svg style="left:814px;top:507.7px;" width="28" height="9" viewBox="0 0 28 9"><path d="M0.8 7.2L6.5 1.5l5.7 5.7" fill="none" stroke="#777" stroke-width="1.2"/><path d="M15.3 1.5L21 7.2l5.7-5.7" fill="none" stroke="#777" stroke-width="1.1"/></svg><div style="position:absolute;top:504.27px;font-size:13.5px;line-height:13.5px;color:#666;white-space:nowrap;letter-spacing:0.05px;left:875.00px;">Date</div><svg style="left:910px;top:507.7px;" width="28" height="9" viewBox="0 0 28 9"><path d="M0.8 7.2L6.5 1.5l5.7 5.7" fill="none" stroke="#777" stroke-width="1.2"/><path d="M15.3 1.5L21 7.2l5.7-5.7" fill="none" stroke="#777" stroke-width="1.1"/></svg><div style="position:absolute;top:504.27px;font-size:13.5px;line-height:13.5px;color:#666;white-space:nowrap;letter-spacing:0.05px;left:985.00px;">G/L</div><svg style="left:1012px;top:507.7px;" width="28" height="9" viewBox="0 0 28 9"><path d="M0.8 7.2L6.5 1.5l5.7 5.7" fill="none" stroke="#777" stroke-width="1.2"/><path d="M15.3 1.5L21 7.2l5.7-5.7" fill="none" stroke="#777" stroke-width="1.1"/></svg><div style="position:absolute;top:504.27px;font-size:13.5px;line-height:13.5px;color:#666;white-space:nowrap;letter-spacing:0.05px;left:1066.50px;">G/L (Description)</div><div style="position:absolute;top:504.27px;font-size:13.5px;line-height:13.5px;color:#666;white-space:nowrap;letter-spacing:0.05px;left:1237.00px;">Description</div><div style="position:absolute;top:504.27px;font-size:13.5px;line-height:13.5px;color:#666;white-space:nowrap;letter-spacing:0.05px;left:1347.00px;">Amount</div><div style="position:absolute;top:504.27px;font-size:13.5px;line-height:13.5px;color:#666;white-space:nowrap;letter-spacing:0.05px;left:1449.00px;">A/R</div><svg style="left:1476px;top:507.7px;" width="28" height="9" viewBox="0 0 28 9"><path d="M0.8 7.2L6.5 1.5l5.7 5.7" fill="none" stroke="#777" stroke-width="1.2"/><path d="M15.3 1.5L21 7.2l5.7-5.7" fill="none" stroke="#777" stroke-width="1.1"/></svg><div style="position:absolute;top:504.27px;font-size:13.5px;line-height:13.5px;color:#666;white-space:nowrap;letter-spacing:0.05px;left:1531.50px;">A/P</div><svg style="left:1558px;top:507.7px;" width="28" height="9" viewBox="0 0 28 9"><path d="M0.8 7.2L6.5 1.5l5.7 5.7" fill="none" stroke="#777" stroke-width="1.2"/><path d="M15.3 1.5L21 7.2l5.7-5.7" fill="none" stroke="#777" stroke-width="1.1"/></svg><div style="position:absolute;top:504.27px;font-size:13.5px;line-height:13.5px;color:#666;white-space:nowrap;letter-spacing:0.05px;left:1612.50px;">Journal</div><div style="position:absolute;top:504.27px;font-size:13.5px;line-height:13.5px;color:#666;white-space:nowrap;letter-spacing:0.05px;left:1689.00px;">Your ref.</div><svg style="left:1748px;top:507.7px;" width="28" height="9" viewBox="0 0 28 9"><path d="M0.8 7.2L6.5 1.5l5.7 5.7" fill="none" stroke="#777" stroke-width="1.2"/><path d="M15.3 1.5L21 7.2l5.7-5.7" fill="none" stroke="#777" stroke-width="1.1"/></svg><div style="position:absolute;left:0;top:524px;width:1912px;height:420px;overflow:hidden"><div style="position:absolute;left:148px;top:33px;width:1650px;height:1px;background:#dcdcdc;"></div><div style="position:absolute;top:10.15px;font-size:14px;line-height:14px;color:#333;white-space:nowrap;letter-spacing:0.4px;left:157.00px;">Import (Automatically)</div><div style="position:absolute;top:10.15px;font-size:14px;line-height:14px;color:#333;white-space:nowrap;letter-spacing:0.4px;left:359.50px;">602</div><div style="position:absolute;top:10.15px;font-size:14px;line-height:14px;color:#333;white-space:nowrap;letter-spacing:0.4px;left:475.00px;">2011</div><div style="position:absolute;top:10.15px;font-size:14px;line-height:14px;color:#333;white-space:nowrap;letter-spacing:0.4px;left:562.90px;width:60px;text-align:right;">11</div><div style="position:absolute;top:10.15px;font-size:14px;line-height:14px;color:#333;white-space:nowrap;letter-spacing:0.4px;left:648.40px;width:100px;text-align:right;">11910128</div><div style="position:absolute;top:10.15px;font-size:14px;line-height:14px;color:#333;white-space:nowrap;letter-spacing:0.4px;left:761.90px;width:100px;text-align:right;">10000201</div><div style="position:absolute;top:10.15px;font-size:14px;line-height:14px;color:#333;white-space:nowrap;letter-spacing:0.4px;left:875.00px;">18-11-2011</div><div style="position:absolute;top:10.15px;font-size:14px;line-height:14px;color:#333;white-space:nowrap;letter-spacing:0.4px;left:993.90px;width:60px;text-align:right;">3000</div><div style="position:absolute;top:10.15px;font-size:14px;line-height:14px;color:#333;white-space:nowrap;letter-spacing:0.4px;left:1066.00px;">Stock</div><div style="position:absolute;top:10.15px;font-size:14px;line-height:14px;color:#333;white-space:nowrap;letter-spacing:0.4px;left:1316.90px;width:120px;text-align:right;">4,210.00</div><div style="position:absolute;top:10.15px;font-size:14px;line-height:14px;color:#333;white-space:nowrap;letter-spacing:0.4px;left:1635.40px;width:40px;text-align:right;">91</div><div style="position:absolute;left:148px;top:66px;width:1650px;height:1px;background:#dcdcdc;"></div><div style="position:absolute;top:43.33px;font-size:14px;line-height:14px;color:#333;white-space:nowrap;letter-spacing:0.4px;left:157.00px;">Import (Automatically)</div><div style="position:absolute;top:43.33px;font-size:14px;line-height:14px;color:#333;white-space:nowrap;letter-spacing:0.4px;left:359.50px;">602</div><div style="position:absolute;top:43.33px;font-size:14px;line-height:14px;color:#333;white-space:nowrap;letter-spacing:0.4px;left:475.00px;">2011</div><div style="position:absolute;top:43.33px;font-size:14px;line-height:14px;color:#333;white-space:nowrap;letter-spacing:0.4px;left:562.90px;width:60px;text-align:right;">11</div><div style="position:absolute;top:43.33px;font-size:14px;line-height:14px;color:#333;white-space:nowrap;letter-spacing:0.4px;left:648.40px;width:100px;text-align:right;">11910128</div><div style="position:absolute;top:43.33px;font-size:14px;line-height:14px;color:#333;white-space:nowrap;letter-spacing:0.4px;left:761.90px;width:100px;text-align:right;">10000201</div><div style="position:absolute;top:43.33px;font-size:14px;line-height:14px;color:#333;white-space:nowrap;letter-spacing:0.4px;left:875.00px;">18-11-2011</div><div style="position:absolute;top:43.33px;font-size:14px;line-height:14px;color:#333;white-space:nowrap;letter-spacing:0.4px;left:993.90px;width:60px;text-align:right;">3000</div><div style="position:absolute;top:43.33px;font-size:14px;line-height:14px;color:#333;white-space:nowrap;letter-spacing:0.4px;left:1066.00px;">Stock</div><div style="position:absolute;top:43.33px;font-size:14px;line-height:14px;color:#333;white-space:nowrap;letter-spacing:0.4px;left:1316.90px;width:120px;text-align:right;">4,210.00</div><div style="position:absolute;top:43.33px;font-size:14px;line-height:14px;color:#333;white-space:nowrap;letter-spacing:0.4px;left:1635.40px;width:40px;text-align:right;">91</div><div style="position:absolute;left:148px;top:100px;width:1650px;height:1px;background:#dcdcdc;"></div><div style="position:absolute;top:76.51px;font-size:14px;line-height:14px;color:#333;white-space:nowrap;letter-spacing:0.4px;left:157.00px;">Import (Automatically)</div><div style="position:absolute;top:76.51px;font-size:14px;line-height:14px;color:#333;white-space:nowrap;letter-spacing:0.4px;left:359.50px;">602</div><div style="position:absolute;top:76.51px;font-size:14px;line-height:14px;color:#333;white-space:nowrap;letter-spacing:0.4px;left:475.00px;">2011</div><div style="position:absolute;top:76.51px;font-size:14px;line-height:14px;color:#333;white-space:nowrap;letter-spacing:0.4px;left:562.90px;width:60px;text-align:right;">11</div><div style="position:absolute;top:76.51px;font-size:14px;line-height:14px;color:#333;white-space:nowrap;letter-spacing:0.4px;left:648.40px;width:100px;text-align:right;">11910128</div><div style="position:absolute;top:76.51px;font-size:14px;line-height:14px;color:#333;white-space:nowrap;letter-spacing:0.4px;left:761.90px;width:100px;text-align:right;">10000201</div><div style="position:absolute;top:76.51px;font-size:14px;line-height:14px;color:#333;white-space:nowrap;letter-spacing:0.4px;left:875.00px;">18-11-2011</div><div style="position:absolute;top:76.51px;font-size:14px;line-height:14px;color:#333;white-space:nowrap;letter-spacing:0.4px;left:993.90px;width:60px;text-align:right;">3000</div><div style="position:absolute;top:76.51px;font-size:14px;line-height:14px;color:#333;white-space:nowrap;letter-spacing:0.4px;left:1066.00px;">Stock</div><div style="position:absolute;top:76.51px;font-size:14px;line-height:14px;color:#333;white-space:nowrap;letter-spacing:0.4px;left:1316.90px;width:120px;text-align:right;">4,210.00</div><div style="position:absolute;top:76.51px;font-size:14px;line-height:14px;color:#333;white-space:nowrap;letter-spacing:0.4px;left:1635.40px;width:40px;text-align:right;">91</div><div style="position:absolute;left:148px;top:133px;width:1650px;height:1px;background:#dcdcdc;"></div><div style="position:absolute;top:109.69px;font-size:14px;line-height:14px;color:#333;white-space:nowrap;letter-spacing:0.4px;left:157.00px;">Import (Automatically)</div><div style="position:absolute;top:109.69px;font-size:14px;line-height:14px;color:#333;white-space:nowrap;letter-spacing:0.4px;left:359.50px;">602</div><div style="position:absolute;top:109.69px;font-size:14px;line-height:14px;color:#333;white-space:nowrap;letter-spacing:0.4px;left:475.00px;">2011</div><div style="position:absolute;top:109.69px;font-size:14px;line-height:14px;color:#333;white-space:nowrap;letter-spacing:0.4px;left:562.90px;width:60px;text-align:right;">11</div><div style="position:absolute;top:109.69px;font-size:14px;line-height:14px;color:#333;white-space:nowrap;letter-spacing:0.4px;left:648.40px;width:100px;text-align:right;">11910128</div><div style="position:absolute;top:109.69px;font-size:14px;line-height:14px;color:#333;white-space:nowrap;letter-spacing:0.4px;left:761.90px;width:100px;text-align:right;">10000201</div><div style="position:absolute;top:109.69px;font-size:14px;line-height:14px;color:#333;white-space:nowrap;letter-spacing:0.4px;left:875.00px;">18-11-2011</div><div style="position:absolute;top:109.69px;font-size:14px;line-height:14px;color:#333;white-space:nowrap;letter-spacing:0.4px;left:993.90px;width:60px;text-align:right;">3000</div><div style="position:absolute;top:109.69px;font-size:14px;line-height:14px;color:#333;white-space:nowrap;letter-spacing:0.4px;left:1066.00px;">Stock</div><div style="position:absolute;top:109.69px;font-size:14px;line-height:14px;color:#333;white-space:nowrap;letter-spacing:0.4px;left:1316.90px;width:120px;text-align:right;">4,210.00</div><div style="position:absolute;top:109.69px;font-size:14px;line-height:14px;color:#333;white-space:nowrap;letter-spacing:0.4px;left:1635.40px;width:40px;text-align:right;">91</div><div style="position:absolute;left:148px;top:166px;width:1650px;height:1px;background:#dcdcdc;"></div><div style="position:absolute;top:142.87px;font-size:14px;line-height:14px;color:#333;white-space:nowrap;letter-spacing:0.4px;left:157.00px;">Import (Automatically)</div><div style="position:absolute;top:142.87px;font-size:14px;line-height:14px;color:#333;white-space:nowrap;letter-spacing:0.4px;left:359.50px;">602</div><div style="position:absolute;top:142.87px;font-size:14px;line-height:14px;color:#333;white-space:nowrap;letter-spacing:0.4px;left:475.00px;">2011</div><div style="position:absolute;top:142.87px;font-size:14px;line-height:14px;color:#333;white-space:nowrap;letter-spacing:0.4px;left:562.90px;width:60px;text-align:right;">11</div><div style="position:absolute;top:142.87px;font-size:14px;line-height:14px;color:#333;white-space:nowrap;letter-spacing:0.4px;left:648.40px;width:100px;text-align:right;">11910128</div><div style="position:absolute;top:142.87px;font-size:14px;line-height:14px;color:#333;white-space:nowrap;letter-spacing:0.4px;left:761.90px;width:100px;text-align:right;">10000201</div><div style="position:absolute;top:142.87px;font-size:14px;line-height:14px;color:#333;white-space:nowrap;letter-spacing:0.4px;left:875.00px;">18-11-2011</div><div style="position:absolute;top:142.87px;font-size:14px;line-height:14px;color:#333;white-space:nowrap;letter-spacing:0.4px;left:993.90px;width:60px;text-align:right;">3000</div><div style="position:absolute;top:142.87px;font-size:14px;line-height:14px;color:#333;white-space:nowrap;letter-spacing:0.4px;left:1066.00px;">Stock</div><div style="position:absolute;top:142.87px;font-size:14px;line-height:14px;color:#333;white-space:nowrap;letter-spacing:0.4px;left:1316.90px;width:120px;text-align:right;">4,210.00</div><div style="position:absolute;top:142.87px;font-size:14px;line-height:14px;color:#333;white-space:nowrap;letter-spacing:0.4px;left:1635.40px;width:40px;text-align:right;">91</div><div style="position:absolute;left:148px;top:199px;width:1650px;height:1px;background:#dcdcdc;"></div><div style="position:absolute;top:176.05px;font-size:14px;line-height:14px;color:#333;white-space:nowrap;letter-spacing:0.4px;left:157.00px;">Import (Automatically)</div><div style="position:absolute;top:176.05px;font-size:14px;line-height:14px;color:#333;white-space:nowrap;letter-spacing:0.4px;left:359.50px;">602</div><div style="position:absolute;top:176.05px;font-size:14px;line-height:14px;color:#333;white-space:nowrap;letter-spacing:0.4px;left:475.00px;">2011</div><div style="position:absolute;top:176.05px;font-size:14px;line-height:14px;color:#333;white-space:nowrap;letter-spacing:0.4px;left:562.90px;width:60px;text-align:right;">11</div><div style="position:absolute;top:176.05px;font-size:14px;line-height:14px;color:#333;white-space:nowrap;letter-spacing:0.4px;left:648.40px;width:100px;text-align:right;">11910128</div><div style="position:absolute;top:176.05px;font-size:14px;line-height:14px;color:#333;white-space:nowrap;letter-spacing:0.4px;left:761.90px;width:100px;text-align:right;">10000201</div><div style="position:absolute;top:176.05px;font-size:14px;line-height:14px;color:#333;white-space:nowrap;letter-spacing:0.4px;left:875.00px;">18-11-2011</div><div style="position:absolute;top:176.05px;font-size:14px;line-height:14px;color:#333;white-space:nowrap;letter-spacing:0.4px;left:993.90px;width:60px;text-align:right;">7000</div><div style="position:absolute;top:176.05px;font-size:14px;line-height:14px;color:#333;white-space:nowrap;letter-spacing:0.4px;left:1066.00px;">Cost of goods sold</div><div style="position:absolute;top:176.05px;font-size:14px;line-height:14px;color:#333;white-space:nowrap;letter-spacing:0.4px;left:1316.90px;width:120px;text-align:right;">-4,210.00</div><div style="position:absolute;top:176.05px;font-size:14px;line-height:14px;color:#333;white-space:nowrap;letter-spacing:0.4px;left:1635.40px;width:40px;text-align:right;">91</div><div style="position:absolute;left:148px;top:232px;width:1650px;height:1px;background:#dcdcdc;"></div><div style="position:absolute;top:209.23px;font-size:14px;line-height:14px;color:#333;white-space:nowrap;letter-spacing:0.4px;left:157.00px;">Import (Automatically)</div><div style="position:absolute;top:209.23px;font-size:14px;line-height:14px;color:#333;white-space:nowrap;letter-spacing:0.4px;left:359.50px;">602</div><div style="position:absolute;top:209.23px;font-size:14px;line-height:14px;color:#333;white-space:nowrap;letter-spacing:0.4px;left:475.00px;">2011</div><div style="position:absolute;top:209.23px;font-size:14px;line-height:14px;color:#333;white-space:nowrap;letter-spacing:0.4px;left:562.90px;width:60px;text-align:right;">11</div><div style="position:absolute;top:209.23px;font-size:14px;line-height:14px;color:#333;white-space:nowrap;letter-spacing:0.4px;left:648.40px;width:100px;text-align:right;">11910128</div><div style="position:absolute;top:209.23px;font-size:14px;line-height:14px;color:#333;white-space:nowrap;letter-spacing:0.4px;left:761.90px;width:100px;text-align:right;">10000201</div><div style="position:absolute;top:209.23px;font-size:14px;line-height:14px;color:#333;white-space:nowrap;letter-spacing:0.4px;left:875.00px;">18-11-2011</div><div style="position:absolute;top:209.23px;font-size:14px;line-height:14px;color:#333;white-space:nowrap;letter-spacing:0.4px;left:993.90px;width:60px;text-align:right;">7000</div><div style="position:absolute;top:209.23px;font-size:14px;line-height:14px;color:#333;white-space:nowrap;letter-spacing:0.4px;left:1066.00px;">Cost of goods sold</div><div style="position:absolute;top:209.23px;font-size:14px;line-height:14px;color:#333;white-space:nowrap;letter-spacing:0.4px;left:1316.90px;width:120px;text-align:right;">-4,210.00</div><div style="position:absolute;top:209.23px;font-size:14px;line-height:14px;color:#333;white-space:nowrap;letter-spacing:0.4px;left:1635.40px;width:40px;text-align:right;">91</div><div style="position:absolute;left:148px;top:265px;width:1650px;height:1px;background:#dcdcdc;"></div><div style="position:absolute;top:242.41px;font-size:14px;line-height:14px;color:#333;white-space:nowrap;letter-spacing:0.4px;left:157.00px;">Import (Automatically)</div><div style="position:absolute;top:242.41px;font-size:14px;line-height:14px;color:#333;white-space:nowrap;letter-spacing:0.4px;left:359.50px;">602</div><div style="position:absolute;top:242.41px;font-size:14px;line-height:14px;color:#333;white-space:nowrap;letter-spacing:0.4px;left:475.00px;">2011</div><div style="position:absolute;top:242.41px;font-size:14px;line-height:14px;color:#333;white-space:nowrap;letter-spacing:0.4px;left:562.90px;width:60px;text-align:right;">11</div><div style="position:absolute;top:242.41px;font-size:14px;line-height:14px;color:#333;white-space:nowrap;letter-spacing:0.4px;left:648.40px;width:100px;text-align:right;">11910128</div><div style="position:absolute;top:242.41px;font-size:14px;line-height:14px;color:#333;white-space:nowrap;letter-spacing:0.4px;left:761.90px;width:100px;text-align:right;">10000201</div><div style="position:absolute;top:242.41px;font-size:14px;line-height:14px;color:#333;white-space:nowrap;letter-spacing:0.4px;left:875.00px;">18-11-2011</div><div style="position:absolute;top:242.41px;font-size:14px;line-height:14px;color:#333;white-space:nowrap;letter-spacing:0.4px;left:993.90px;width:60px;text-align:right;">7000</div><div style="position:absolute;top:242.41px;font-size:14px;line-height:14px;color:#333;white-space:nowrap;letter-spacing:0.4px;left:1066.00px;">Cost of goods sold</div><div style="position:absolute;top:242.41px;font-size:14px;line-height:14px;color:#333;white-space:nowrap;letter-spacing:0.4px;left:1316.90px;width:120px;text-align:right;">-4,210.00</div><div style="position:absolute;top:242.41px;font-size:14px;line-height:14px;color:#333;white-space:nowrap;letter-spacing:0.4px;left:1635.40px;width:40px;text-align:right;">91</div><div style="position:absolute;left:148px;top:299px;width:1650px;height:1px;background:#dcdcdc;"></div><div style="position:absolute;top:275.59px;font-size:14px;line-height:14px;color:#333;white-space:nowrap;letter-spacing:0.4px;left:157.00px;">Import (Automatically)</div><div style="position:absolute;top:275.59px;font-size:14px;line-height:14px;color:#333;white-space:nowrap;letter-spacing:0.4px;left:359.50px;">602</div><div style="position:absolute;top:275.59px;font-size:14px;line-height:14px;color:#333;white-space:nowrap;letter-spacing:0.4px;left:475.00px;">2011</div><div style="position:absolute;top:275.59px;font-size:14px;line-height:14px;color:#333;white-space:nowrap;letter-spacing:0.4px;left:562.90px;width:60px;text-align:right;">11</div><div style="position:absolute;top:275.59px;font-size:14px;line-height:14px;color:#333;white-space:nowrap;letter-spacing:0.4px;left:648.40px;width:100px;text-align:right;">11910128</div><div style="position:absolute;top:275.59px;font-size:14px;line-height:14px;color:#333;white-space:nowrap;letter-spacing:0.4px;left:761.90px;width:100px;text-align:right;">10000201</div><div style="position:absolute;top:275.59px;font-size:14px;line-height:14px;color:#333;white-space:nowrap;letter-spacing:0.4px;left:875.00px;">18-11-2011</div><div style="position:absolute;top:275.59px;font-size:14px;line-height:14px;color:#333;white-space:nowrap;letter-spacing:0.4px;left:993.90px;width:60px;text-align:right;">7000</div><div style="position:absolute;top:275.59px;font-size:14px;line-height:14px;color:#333;white-space:nowrap;letter-spacing:0.4px;left:1066.00px;">Cost of goods sold</div><div style="position:absolute;top:275.59px;font-size:14px;line-height:14px;color:#333;white-space:nowrap;letter-spacing:0.4px;left:1316.90px;width:120px;text-align:right;">-4,210.00</div><div style="position:absolute;top:275.59px;font-size:14px;line-height:14px;color:#333;white-space:nowrap;letter-spacing:0.4px;left:1635.40px;width:40px;text-align:right;">91</div><div style="position:absolute;left:148px;top:332px;width:1650px;height:1px;background:#dcdcdc;"></div><div style="position:absolute;top:308.77px;font-size:14px;line-height:14px;color:#333;white-space:nowrap;letter-spacing:0.4px;left:157.00px;">Import (Automatically)</div><div style="position:absolute;top:308.77px;font-size:14px;line-height:14px;color:#333;white-space:nowrap;letter-spacing:0.4px;left:359.50px;">602</div><div style="position:absolute;top:308.77px;font-size:14px;line-height:14px;color:#333;white-space:nowrap;letter-spacing:0.4px;left:475.00px;">2011</div><div style="position:absolute;top:308.77px;font-size:14px;line-height:14px;color:#333;white-space:nowrap;letter-spacing:0.4px;left:562.90px;width:60px;text-align:right;">11</div><div style="position:absolute;top:308.77px;font-size:14px;line-height:14px;color:#333;white-space:nowrap;letter-spacing:0.4px;left:648.40px;width:100px;text-align:right;">11910128</div><div style="position:absolute;top:308.77px;font-size:14px;line-height:14px;color:#333;white-space:nowrap;letter-spacing:0.4px;left:761.90px;width:100px;text-align:right;">10000201</div><div style="position:absolute;top:308.77px;font-size:14px;line-height:14px;color:#333;white-space:nowrap;letter-spacing:0.4px;left:875.00px;">18-11-2011</div><div style="position:absolute;top:308.77px;font-size:14px;line-height:14px;color:#333;white-space:nowrap;letter-spacing:0.4px;left:993.90px;width:60px;text-align:right;">7000</div><div style="position:absolute;top:308.77px;font-size:14px;line-height:14px;color:#333;white-space:nowrap;letter-spacing:0.4px;left:1066.00px;">Cost of goods sold</div><div style="position:absolute;top:308.77px;font-size:14px;line-height:14px;color:#333;white-space:nowrap;letter-spacing:0.4px;left:1316.90px;width:120px;text-align:right;">-4,210.00</div><div style="position:absolute;top:308.77px;font-size:14px;line-height:14px;color:#333;white-space:nowrap;letter-spacing:0.4px;left:1635.40px;width:40px;text-align:right;">91</div><div style="position:absolute;left:148px;top:365px;width:1650px;height:1px;background:#dcdcdc;"></div><div style="position:absolute;top:341.95px;font-size:14px;line-height:14px;color:#333;white-space:nowrap;letter-spacing:0.4px;left:157.00px;">Import (Automatically)</div><div style="position:absolute;top:341.95px;font-size:14px;line-height:14px;color:#333;white-space:nowrap;letter-spacing:0.4px;left:359.50px;">602</div><div style="position:absolute;top:341.95px;font-size:14px;line-height:14px;color:#333;white-space:nowrap;letter-spacing:0.4px;left:475.00px;">2011</div><div style="position:absolute;top:341.95px;font-size:14px;line-height:14px;color:#333;white-space:nowrap;letter-spacing:0.4px;left:562.90px;width:60px;text-align:right;">11</div><div style="position:absolute;top:341.95px;font-size:14px;line-height:14px;color:#333;white-space:nowrap;letter-spacing:0.4px;left:648.40px;width:100px;text-align:right;">11910127</div><div style="position:absolute;top:341.95px;font-size:14px;line-height:14px;color:#333;white-space:nowrap;letter-spacing:0.4px;left:761.90px;width:100px;text-align:right;">10000200</div><div style="position:absolute;top:341.95px;font-size:14px;line-height:14px;color:#333;white-space:nowrap;letter-spacing:0.4px;left:875.00px;">18-11-2011</div><div style="position:absolute;top:341.95px;font-size:14px;line-height:14px;color:#333;white-space:nowrap;letter-spacing:0.4px;left:993.90px;width:60px;text-align:right;">7000</div><div style="position:absolute;top:341.95px;font-size:14px;line-height:14px;color:#333;white-space:nowrap;letter-spacing:0.4px;left:1066.00px;">Cost of goods sold</div><div style="position:absolute;top:341.95px;font-size:14px;line-height:14px;color:#333;white-space:nowrap;letter-spacing:0.4px;left:1316.90px;width:120px;text-align:right;">71,570.00</div><div style="position:absolute;top:341.95px;font-size:14px;line-height:14px;color:#333;white-space:nowrap;letter-spacing:0.4px;left:1635.40px;width:40px;text-align:right;">91</div><div style="position:absolute;left:148px;top:398px;width:1650px;height:1px;background:#dcdcdc;"></div><div style="position:absolute;top:375.13px;font-size:14px;line-height:14px;color:#333;white-space:nowrap;letter-spacing:0.4px;left:157.00px;">Import (Automatically)</div><div style="position:absolute;top:375.13px;font-size:14px;line-height:14px;color:#333;white-space:nowrap;letter-spacing:0.4px;left:359.50px;">602</div><div style="position:absolute;top:375.13px;font-size:14px;line-height:14px;color:#333;white-space:nowrap;letter-spacing:0.4px;left:475.00px;">2011</div><div style="position:absolute;top:375.13px;font-size:14px;line-height:14px;color:#333;white-space:nowrap;letter-spacing:0.4px;left:562.90px;width:60px;text-align:right;">11</div><div style="position:absolute;top:375.13px;font-size:14px;line-height:14px;color:#333;white-space:nowrap;letter-spacing:0.4px;left:648.40px;width:100px;text-align:right;">11910127</div><div style="position:absolute;top:375.13px;font-size:14px;line-height:14px;color:#333;white-space:nowrap;letter-spacing:0.4px;left:761.90px;width:100px;text-align:right;">10000200</div><div style="position:absolute;top:375.13px;font-size:14px;line-height:14px;color:#333;white-space:nowrap;letter-spacing:0.4px;left:875.00px;">18-11-2011</div><div style="position:absolute;top:375.13px;font-size:14px;line-height:14px;color:#333;white-space:nowrap;letter-spacing:0.4px;left:993.90px;width:60px;text-align:right;">3000</div><div style="position:absolute;top:375.13px;font-size:14px;line-height:14px;color:#333;white-space:nowrap;letter-spacing:0.4px;left:1066.00px;">Stock</div><div style="position:absolute;top:375.13px;font-size:14px;line-height:14px;color:#333;white-space:nowrap;letter-spacing:0.4px;left:1316.90px;width:120px;text-align:right;">-71,570.00</div><div style="position:absolute;top:375.13px;font-size:14px;line-height:14px;color:#333;white-space:nowrap;letter-spacing:0.4px;left:1635.40px;width:40px;text-align:right;">91</div><div style="position:absolute;left:148px;top:398px;width:1650px;height:40px;background:#f2f2f2;"></div><div style="position:absolute;left:148px;top:431px;width:1650px;height:1px;background:#dcdcdc;"></div><div style="position:absolute;top:408.31px;font-size:14px;line-height:14px;color:#333;white-space:nowrap;letter-spacing:0.4px;left:157.00px;">Import (Automatically)</div><div style="position:absolute;top:408.31px;font-size:14px;line-height:14px;color:#333;white-space:nowrap;letter-spacing:0.4px;left:359.50px;">602</div><div style="position:absolute;top:408.31px;font-size:14px;line-height:14px;color:#333;white-space:nowrap;letter-spacing:0.4px;left:475.00px;">2011</div><div style="position:absolute;top:408.31px;font-size:14px;line-height:14px;color:#333;white-space:nowrap;letter-spacing:0.4px;left:562.90px;width:60px;text-align:right;">11</div><div style="position:absolute;top:408.31px;font-size:14px;line-height:14px;color:#333;white-space:nowrap;letter-spacing:0.4px;left:648.40px;width:100px;text-align:right;">11910126</div><div style="position:absolute;top:408.31px;font-size:14px;line-height:14px;color:#333;white-space:nowrap;letter-spacing:0.4px;left:761.90px;width:100px;text-align:right;">10000199</div><div style="position:absolute;top:408.31px;font-size:14px;line-height:14px;color:#333;white-space:nowrap;letter-spacing:0.4px;left:875.00px;">09-11-2011</div><div style="position:absolute;top:408.31px;font-size:14px;line-height:14px;color:#333;white-space:nowrap;letter-spacing:0.4px;left:993.90px;width:60px;text-align:right;">3000</div><div style="position:absolute;top:408.31px;font-size:14px;line-height:14px;color:#333;white-space:nowrap;letter-spacing:0.4px;left:1066.00px;">Stock</div><div style="position:absolute;top:408.31px;font-size:14px;line-height:14px;color:#333;white-space:nowrap;letter-spacing:0.4px;left:1316.90px;width:120px;text-align:right;">5,310.00</div><div style="position:absolute;top:408.31px;font-size:14px;line-height:14px;color:#333;white-space:nowrap;letter-spacing:0.4px;left:1635.40px;width:40px;text-align:right;">91</div></div><svg style="left:1801px;top:528px;" width="10" height="8" viewBox="0 0 10 8"><path d="M0.5 7L5 1.5 9.5 7z" fill="#8a8a8a"/></svg><div style="position:absolute;left:1801px;top:541px;width:9px;height:301px;background:#8c8c8c;border-radius:4.5px"></div><svg style="left:1801px;top:931px;" width="10" height="8" viewBox="0 0 10 8"><path d="M0.5 1L5 6.5 9.5 1z" fill="#8a8a8a"/></svg><svg style="left:153px;top:946px;" width="8" height="11" viewBox="0 0 8 11"><path d="M7 1v9L1 5.5z" fill="#8a8a8a"/></svg><div style="position:absolute;left:166px;top:947px;width:1611px;height:9px;background:#8c8c8c;border-radius:4.5px"></div><svg style="left:1785px;top:946px;" width="8" height="11" viewBox="0 0 8 11"><path d="M1 1v9l6-4.5z" fill="#8a8a8a"/></svg><div style="position:absolute;left:148px;top:959px;width:1665px;height:1px;background:#bdbdbd;"></div>
</body></html>
